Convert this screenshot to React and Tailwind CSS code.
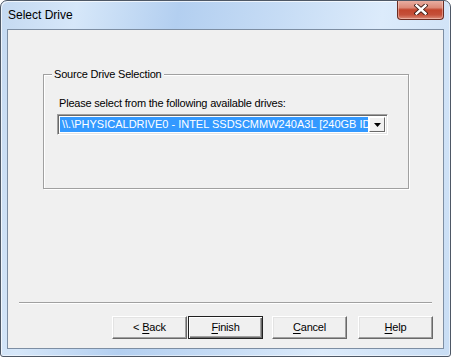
import React from "react";

const FONT = { fontFamily: '"Liberation Sans", Arial, sans-serif' };

function Mnemonic({ text, at = 0 }) {
    return (
        <span>
            {text.slice(0, at)}
            <span className="underline underline-offset-[2px] decoration-[1px]">{text[at]}</span>
            {text.slice(at + 1)}
        </span>
    );
}

function DialogButton({ children, isDefault, className = "" }) {
    return (
        <button
            className={`w-[75px] h-[23px] bg-[#f0f0f0] text-[11px] tracking-[-0.2px] text-black flex items-center justify-center ${
                isDefault
                    ? "border border-[#202020] shadow-[inset_1px_1px_0_#ffffff,inset_-1px_-1px_0_#696969,inset_-2px_-2px_0_#a0a0a0]"
                    : "border border-t-white border-l-white border-r-[#696969] border-b-[#696969] shadow-[inset_-1px_-1px_0_#a0a0a0,inset_1px_1px_0_#e3e3e3]"
            } ${className}`}
        >
            {children}
        </button>
    );
}

function CloseGlyph() {
    return (
        <svg width="14" height="11" viewBox="0 0 14 11">
            <path d="M2.5 1.5 L11.5 9.5 M11.5 1.5 L2.5 9.5" stroke="#3b1a14" strokeWidth="4.2" strokeLinecap="square" />
            <path d="M2.5 1.5 L11.5 9.5 M11.5 1.5 L2.5 9.5" stroke="#ffffff" strokeWidth="2.4" strokeLinecap="square" />
        </svg>
    );
}

export default function App() {
    return (
        <div
            className="w-[451px] h-[357px] flex flex-col border border-[#4e5866] rounded-t-[7px] rounded-b-[3px] overflow-hidden bg-[linear-gradient(100deg,#c4d9f1_0%,#d6e7f9_15%,#b3cff0_35%,#c6dcf5_55%,#dcebfb_75%,#c8ddf4_100%)] shadow-[inset_1px_1px_0_rgba(255,255,255,0.7),inset_-1px_-1px_0_rgba(255,255,255,0.5)]"
            style={FONT}
        >
            {/* Title bar */}
            <div className="h-[28px] flex items-start">
                <span className="ml-[7px] mt-[6px] text-[12px] text-black leading-[16px]">Select Drive</span>
                <button className="ml-auto mr-[6px] -mt-[1px] w-[47px] h-[20px] rounded-b-[4px] border border-[#6b2c22] border-t-0 flex items-center justify-center bg-[linear-gradient(180deg,#eab3a7_0%,#dc8a78_40%,#c2452d_52%,#c5503a_78%,#dc8d7a_100%)] shadow-[inset_0_0_0_1px_rgba(255,220,210,0.45)]">
                    <CloseGlyph />
                </button>
            </div>

            {/* Client area */}
            <div className="flex-1 mx-[6px] mb-[7px] border border-[#7d8ea3] bg-[#f0f0f0] flex flex-col text-[11px] tracking-[-0.2px] text-black">
                {/* Group box */}
                <div className="relative mt-[44px] ml-[35px] w-[366px] h-[115px] border border-[#a0a0a0] shadow-[inset_1px_1px_0_#ffffff,1px_1px_0_#ffffff]">
                    <span className="absolute -top-[8px] left-[8px] px-[2px] bg-[#f0f0f0] leading-[14px]">
                        Source Drive Selection
                    </span>
                    <div className="mt-[21px] ml-[15px] leading-[14px]">
                        Please select from the following available drives:
                    </div>
                    <div className="mt-[4px] ml-[13px] w-[331px] h-[21px] flex border border-[#a0a0a0] border-r-white border-b-white bg-white shadow-[inset_1px_1px_0_#696969,inset_-1px_-1px_0_#e3e3e3] p-[2px]">
                        <div className="flex-1 min-w-0 overflow-hidden whitespace-nowrap bg-[#3399ff] text-white leading-[15px] pl-[2px] tracking-normal">
                            {"\\\\.\\PHYSICALDRIVE0 - INTEL SSDSCMMW240A3L [240GB IDE]"}
                        </div>
                        <div className="w-[16px] h-[15px] ml-[1px] bg-[#f0f0f0] border border-t-white border-l-white border-r-[#696969] border-b-[#696969] flex items-center justify-center">
                            <svg width="7" height="4" viewBox="0 0 7 4">
                                <path d="M0 0 H7 L3.5 4 Z" fill="#000" />
                            </svg>
                        </div>
                    </div>
                </div>

                {/* Separator */}
                <div className="mt-auto mx-[11px] h-[2px] border-t border-[#a0a0a0] border-b border-b-white" />

                {/* Buttons */}
                <div className="flex justify-end pr-[10px] mt-[12px] mb-[9px]">
                    <DialogButton>
                        <span className="whitespace-pre">{"< "}</span>
                        <Mnemonic text="Back" />
                    </DialogButton>
                    <DialogButton isDefault className="ml-[1px]">
                        <Mnemonic text="Finish" />
                    </DialogButton>
                    <DialogButton className="ml-[9px]">
                        <Mnemonic text="Cancel" />
                    </DialogButton>
                    <DialogButton className="ml-[11px]">
                        <Mnemonic text="Help" />
                    </DialogButton>
                </div>
            </div>
        </div>
    );
}
